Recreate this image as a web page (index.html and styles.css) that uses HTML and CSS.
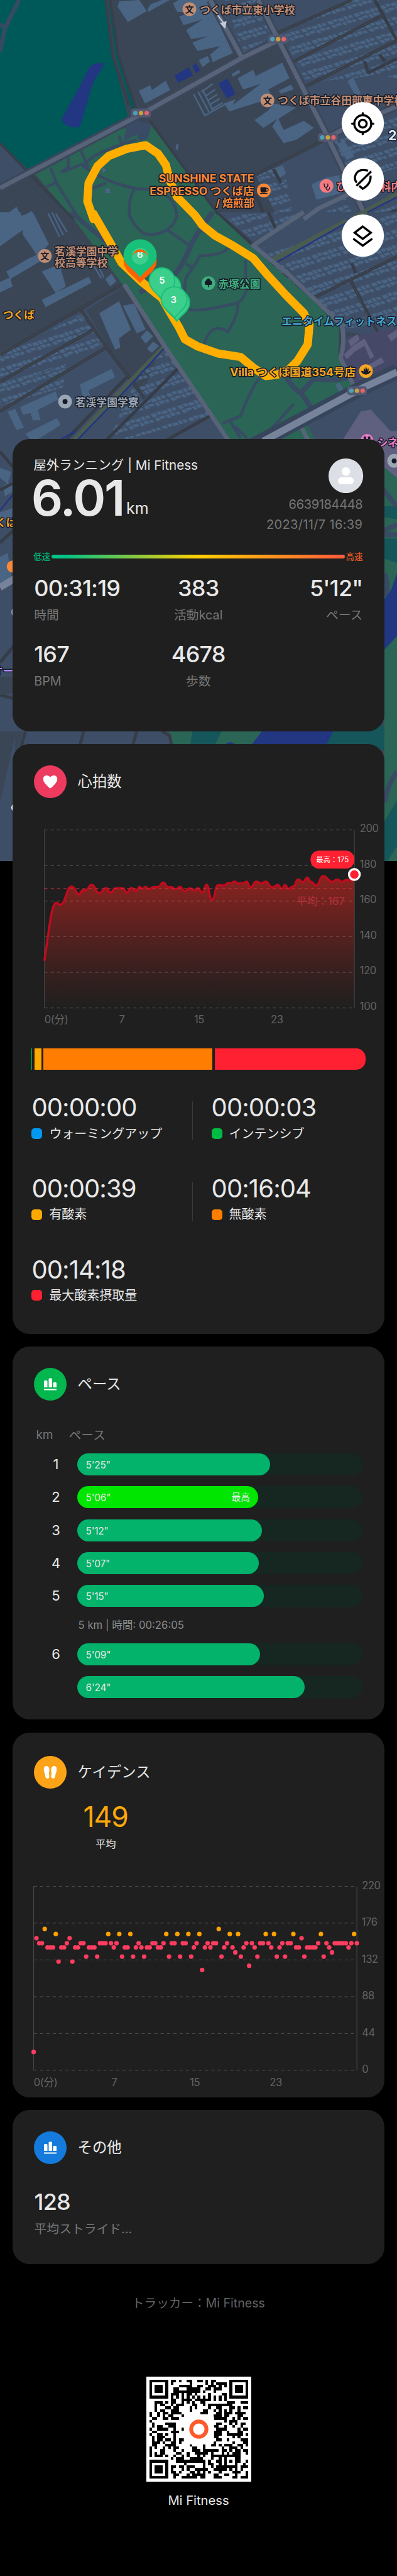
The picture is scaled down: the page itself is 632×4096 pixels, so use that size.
FILE: index.html
```html
<!DOCTYPE html>
<html lang="ja">
<head>
<meta charset="utf-8">
<title>屋外ランニング | Mi Fitness</title>
<link rel="stylesheet" href="styles.css">
</head>
<body>
<svg class="map" viewBox="0 0 1125 2436" preserveAspectRatio="none">
  <defs>
    <pattern id="houses" width="118" height="92" patternUnits="userSpaceOnUse" patternTransform="rotate(-28)">
      <path class="bld" d="M4 8h20v24H4zM29 6h17v20H29zM50 10h22v22H50zM77 6h14v26H77zM96 9h16v20H96zM6 40h16v22H6zM26 38h22v18H26zM54 40h14v24H54zM73 38h20v20H73zM97 42h15v18H97z"/>
    </pattern>
  </defs>
  <rect width="1125" height="2436" fill="#3a4656"/>
  <g transform="scale(.7175 .3954)">
    <path fill="#3d4e66" d="M850 0H1568V1568H1100L1010 1250 1290 1000 1100 300 955 400ZM0 1030L105 1225 0 1320Z"/>
    <path fill="url(#houses)" d="M890 0H1010L1080 250 960 390ZM1110 230L1390 0H1568V560L1500 540 1210 590ZM1320 1020L1568 800V1200L1400 1300ZM1010 1250L1120 1180 1160 1568H1100ZM1130 1568L1360 1400 1400 1568ZM1480 1450H1568V1568H1480Z"/>
    <path fill="#005959" d="M0 0H412L445 400 505 830 110 1210 0 1020ZM428 0H438L470 390 537 770 520 780 455 390Z"/>
    <path class="edge" d="M418 0L445 400 510 760M435 0L467 390 535 770"/>
    <path class="path" d="M75 0L20 200 0 370M0 180L25 190"/>
    <path fill="#223682" d="M350 490Q365 445 408 450Q412 480 380 550Q355 640 352 690L320 880Q315 915 300 914Q245 900 244 850L320 600ZM690 540L745 480 762 540 703 593ZM760 470L775 453 790 505 773 522ZM862 597L898 563 930 670 897 706Z"/>
    <path class="bld" d="M470 10L465 50 505 158 580 80 550 0ZM585 60L595 30 640 0H670L585 85ZM683 25L705 0H825L850 70 880 230 920 380 870 420 840 445 830 390 870 330 780 365 760 305 820 260 755 280 735 215 800 140 725 180 708 118 760 85 700 85ZM548 650L593 610 600 645 655 577 672 645 573 740ZM938 560L1000 500 1010 545 1115 448 1143 560 1060 640 1075 700 905 798 885 740 930 710 920 750 1030 600 960 640ZM1005 860L1060 790 1080 740 1170 770 1100 850 1120 930 1200 865 1240 915 1170 1000 1120 1025 1075 905 1095 850 1040 915ZM1100 650L1150 605 1160 640 1110 670ZM1372 580L1395 553 1425 670 1405 690ZM1230 1320L1290 1270 1340 1255 1350 1380 1250 1430ZM785 430L820 400 830 440 800 480ZM915 530L945 497 948 520 920 550ZM697 1030L706 1034 702 1072 693 1066ZM0 1568L65 1480 90 1568ZM85 1550L125 1510 142 1568ZM1090 1200L1115 1185 1130 1240 1100 1280ZM1330 1030L1360 1010 1400 1120 1370 1145Z"/>
    <path class="bldline" d="M765 675L810 830M782 655L825 800M800 640L840 790M795 660L840 600M810 690L850 640M820 720L858 675M828 750L868 705M838 780L880 735M808 828L890 745"/>
    <path class="street" d="M1090 240L1390 0M1150 450L1510 110M1205 620L1568 290M1480 0L1568 290M1295 990L1010 1250M1440 440L1455 520 1568 420M1080 1210L1110 1310M1010 1390L1050 1568M1480 1568L1568 1500M1500 390L1520 440"/>
    <path class="lane" d="M1090 240L1390 0M1150 450L1510 110M1205 620L1568 290M1295 990L1010 1250"/>
  </g>
  <g transform="translate(0 600) scale(.7175 .4209)">
    <path fill="#3d4e66" d="M860 0H1568V860L1350 800 1240 580 1060 330ZM0 650L490 490 650 900 910 1568H0ZM1210 1400L1568 1090V1568H1210Z"/>
    <path fill="#3a4656" d="M0 600L480 480 330 660 0 940ZM340 660L490 500 640 890 560 1230 500 1110Z"/>
    <path fill="url(#houses)" d="M880 20L1190 0 1010 200ZM1000 260L1568 0V290L1160 520 1070 350ZM1170 440L1568 330V760L1360 780 1240 580ZM0 960L330 680 410 900 0 1200ZM0 1200L260 1020 250 1180 0 1300ZM600 970L660 940 830 1370 420 1568 500 1250Z"/>
    <path class="bld" d="M0 0H80L103 105 0 230ZM85 25L130 0 193 215 150 300 90 150ZM25 400L110 315 190 250 200 290 40 450ZM165 400L235 350 260 500 220 545ZM0 470L40 440 50 500 0 540ZM165 590L350 435 362 475 180 640ZM392 680L470 600 517 790 470 850 475 910 455 925 430 830ZM485 630L530 615 575 790 540 815ZM415 450L440 415 460 465 435 500ZM315 1160L440 1055 455 1110 350 1200 355 1230 330 1260ZM80 1310L220 1205 230 1260 150 1330 160 1400 130 1400 120 1350 90 1365ZM555 840L580 795 605 835 575 885ZM580 920L605 870 628 900 600 945ZM100 1490L225 1385 240 1430 130 1550ZM30 1340L60 1325 95 1450 65 1465Z"/>
    <path class="bldline" d="M190 10L235 165M205 0L250 155M220 10L265 135M370 360L400 445M385 350L410 440"/>
    <path class="street" d="M480 490L0 960M320 660L420 910 0 1340M370 790L0 1140M420 910L570 1250M710 1040L400 1568M500 1110L240 1568M830 1370L620 1568M860 10L1240 580M1240 575L1568 300M1390 345L1405 410M1385 460L1568 1060M1060 0L1090 120"/>
    <path class="lane" d="M480 490L0 960M320 660L420 910 0 1340M370 790L0 1140M1240 575L1568 300M1385 460L1560 1060M420 910L570 1250"/>
    <path class="olive" d="M650 905L480 1200 275 1568M1080 320L1290 130 1370 60"/>
    <path class="stream" d="M652 910L500 1190 285 1568M1085 345L1370 70"/>
    <path fill="#454866" d="M1370 840L1568 780V1040L1400 1150 1345 980Z"/>
    <path fill="#5f5f80" d="M1375 865L1412 820 1420 860 1385 905ZM1358 960L1395 895 1440 850 1478 970 1462 990 1440 900 1400 940 1370 990ZM1445 1040L1505 975 1518 1010 1460 1060ZM1530 830L1568 790V840L1545 870ZM1425 1340L1465 1328 1568 1520V1568H1340Z"/>
  </g>
  <path fill="#2a6555" d="M100 494L345 364 430 356 615 605 760 740 890 853 961 928 958 1012 994 1084 1000 1110 870 1200 900 1260H655L345 802 213 625Z"/>
  <path fill="#3a4b66" d="M360 356L382 340 430 352 418 392 395 400 388 380 350 400Z"/>
  <g transform="scale(.7175 .3954)">
    <path class="park-path" d="M540 1000L480 1030 470 970M490 1030Q360 1100 330 1190Q420 1310 540 1350L620 1360M270 1130V1200L240 1230M320 1080L350 1200M200 1200Q220 1300 230 1330L310 1560M180 1340L230 1300M360 1350L420 1310M530 1355Q500 1450 515 1568M650 1390Q700 1450 698 1568M330 1170L250 1230"/>
    <path class="bld" d="M398 1195L420 1215 408 1240ZM415 1350L432 1345 436 1380 418 1384Z"/>
  </g>
  <g transform="translate(0 600) scale(.7175 .4209)">
    <path class="park-path" d="M510 0Q520 90 570 145Q610 165 660 120Q700 70 698 0M660 120L745 220M735 345L765 385M900 240Q890 285 790 295Q750 410 735 440Q720 560 740 650Q770 680 940 610Q980 560 970 480V320M940 610Q940 700 900 805Q830 730 805 900M1025 1110Q980 1230 950 1370L880 1420M1160 1290L1060 1480M910 1410L950 1520M930 1440L1000 1568"/>
    <path class="park-wide" d="M840 0Q760 180 745 260Q720 360 690 420L550 540M1130 1110Q1160 1190 1190 1220L1240 1340M1190 1210L1240 1120Q1320 1140 1380 1110M280 0L420 200 530 430"/>
    <path fill="#4a6484" d="M1325 1160L1340 1145 1360 1200 1340 1210Z"/>
    <path class="road" d="M490 485L650 900 915 1568M1200 0L1000 225 1140 420 1350 760Q1365 860 1345 980L1400 1180M1180 1410L1215 1530"/>
    <path class="main-casing" d="M1000 1568L1410 1200 1568 1070"/>
    <path class="main" d="M1040 1540L1410 1200 1568 1075"/>
  </g>
  <g transform="scale(.7175 .3954)">
    <path class="edge" d="M590 860L860 1530M0 1025L110 1230 290 1568"/>
    <path class="casing" d="M0 1345L560 815 960 410 1098 290M1020 0L1098 280 1295 983 1450 1568M830 0L955 410M1295 983L1350 930 1568 760"/>
    <path class="road" d="M0 1345L560 815 960 410 1098 290M1020 0L1098 280 1295 983 1450 1568M830 0L955 410M1295 983L1350 930 1568 760M1200 1568L1260 1490 1400 1370"/>
    <path class="olive" d="M1568 1390L1390 1568"/><path class="stream" d="M1568 1410L1450 1520"/>
  </g>
  <g transform="translate(0 1220) scale(.7175 .574)">
    <path fill="#3d4e66" d="M0 0H60V1568H0ZM0 1400H680V1568H0Z"/>
    <path fill="#2a6555" d="M1518 180H1568V1568H1518ZM670 1440H1320V1568H670Z"/>
    <path fill="#5f5f80" d="M1500 0H1568V230Q1530 190 1500 160Z"/>
    <path fill="#15565a" d="M1500 370H1568V435L1500 420ZM1500 530H1568V650L1500 620ZM1280 1440H1510Q1525 1500 1520 1568H1280ZM760 1470H880L840 1568H750Z"/>
    <path fill="#223682" d="M1568 700V1010L1500 1100V860L1545 780ZM1040 1470H1320L1280 1568H980ZM875 1568Q900 1510 935 1550L940 1568Z"/>
    <path class="bld" d="M0 180L45 200 30 260 0 230ZM10 270L48 245V300L20 320ZM0 620L30 600 50 740 0 750ZM0 400L48 380V420L0 440Z"/>
    <path class="street" d="M0 550L60 480M0 290L60 250M0 100L60 190M0 1140L60 1050M0 1300L60 1320M100 1480L80 1568M330 1480L312 1568M540 1480L520 1568M640 1480L670 1500 680 1568"/>
    <path class="stream" d="M0 390L60 300M240 40L300 0"/>
    <path class="main" d="M0 770L60 725"/>
    <path class="park-wide" d="M1500 270L1568 370M1500 510H1568M1518 700Q1540 760 1518 810M1568 460L1500 500"/>
    <path fill="#3a4656" d="M0 1210H50V1290L0 1300ZM0 1480H90L70 1568H0Z"/>
  </g>
  <g transform="translate(0 2080) scale(.7175 .5421)">
    <path fill="#3d4e66" d="M0 0H60V657H0Z"/><path fill="#3a4656" d="M0 0H60L0 350Z"/>
    <path fill="#2a6555" d="M1518 0H1568V657H1518Z"/>
    <path fill="#15565a" d="M1518 450L1568 340V580L1530 657H1518Z"/>
    <path class="park-wide" d="M1568 190Q1530 260 1518 350"/>
  </g>
  <path class="route" d="M262 600L265 620 247.500 569 251 518 276 470.500 308.500 441 359 421 412.600 411 448 435 470 466.600 481 510 502 557.500 552.500 609 574 638 610 667 660 694.700 717.500 730.500 760.600 781 811 835.700 861 886 877 920 872 974.600 843 1021 818 1046 786 1060 753 1064 717.500 1040 682 1010 617 1000 560 980 524 960 506 924 488 894.600 459 844 402 798 344 743 308.500 680 262 600"/>
  <path class="arrow" d="M617 43L632 63M626 66L640 62 637 78Z"/>
  <g id="signals"></g>
  <g class="pins">
    <path fill="#ff5f00" d="M397 801C378 780 350 765 350 738a47 47 0 0 1 94 0C444 765 416 780 397 801Z"/>
    <path fill="#18c07a" d="M397 785C380 760 350 750 350 724a47 47 0 0 1 94 0C444 750 414 760 397 785Z"/>
    <circle cx="397" cy="725" r="23.500" fill="#3ccf8c"/>
    <text x="397" y="730" class="pin-num">6</text>
    <path fill="#ff5f00" d="M374 727a23.500 27 0 0 1 46 0q-4-14-23-14t-23 14Z"/>
    <path class="pin" d="M477 870C466 850 441 838 441 812a35.500 35.500 0 0 1 71 0C512 838 488 850 477 870Z"/>
    <path class="pin" d="M460 848C449 832 423 820 423 794a36 36 0 0 1 72 0C495 820 471 832 460 848Z"/>
    <text x="459" y="802" class="pin-num">5</text>
    <path class="pin" d="M501 909C490 890 465 882 465 856a36 36 0 0 1 72 0C537 882 512 890 501 909Z"/>
    <path class="pin" d="M495 900C484 882 457 872 457 848a36.500 36.500 0 0 1 73 0C530 872 506 882 495 900Z"/>
    <text x="492" y="857" class="pin-num">3</text>
  </g>
  <g class="poi">
    <g class="school">
      <circle cx="536.700" cy="26" r="19.500"/><text class="glyph" x="536.700" y="35">文</text><text x="566" y="39">つくば市立東小学校</text>
      <circle cx="757.700" cy="284" r="19.500"/><text class="glyph" x="757.700" y="293">文</text><text x="787" y="296">つくば市立谷田部東中学校</text>
      <circle cx="127" cy="724" r="19.500"/><text class="glyph" x="127" y="733">文</text><text x="155" y="722">茗溪学園中学</text><text x="155" y="754">校高等学校</text>
    </g>
    <g class="cafe">
      <text x="720" y="516" text-anchor="end" textLength="270" lengthAdjust="spacingAndGlyphs">SUNSHINE STATE</text>
      <text x="720" y="551" text-anchor="end" textLength="296" lengthAdjust="spacingAndGlyphs">ESPRESSO つくば店</text>
      <text x="720" y="586" text-anchor="end">/ 焙煎部</text>
      <circle cx="747.600" cy="538.500" r="19.500"/><path class="ink" d="M738 530h17v8q0 7-5 7h-7q-5 0-5-7Z"/><path class="inkline" d="M755 533q6-1 5 4t-6 4M737 547.500h21"/>
      <circle cx="36" cy="1603" r="17"/>
    </g>
    <g class="clinic"><circle cx="925" cy="526" r="19.500"/><path class="inkline" d="M919 519v6q0 5 5 5t5-5v-6M924 530q0 8 5 8t5-8"/><text x="953" y="539">ひ</text><text x="1078" y="539">科内</text></g>
    <g class="nature"><circle cx="590.500" cy="801" r="19.500"/><path class="ink" d="M589 813v-7q-9 1-9-5t4-7q2-6 6.500-6t6.500 6q4 1 4 7t-9 5v7Z"/><text x="618" y="815">赤塚公園</text></g>
    <g class="gold"><text x="8" y="903">つくば</text><text x="-12" y="1489">くば</text><text x="652" y="1064" textLength="356" lengthAdjust="spacingAndGlyphs">Villa つくば国道354号店</text><circle cx="1036.800" cy="1050" r="19.500"/><path class="ink" d="M1037 1060q-12-1-14-11q7 0 9 4q-3-6-1-11q3 1 4 6q0-7 2-10q3 3 3 10q1-5 4-6q2 5-1 11q2-4 8-4q-2 10-14 11Z"/></g>
    <g class="gym"><text x="798" y="920">エニタイムフィットネス</text></g>
    <g class="plain"><text x="213" y="1149">茗渓学園学寮</text><circle cx="184.400" cy="1136" r="19.500"/><circle class="ink" cx="184.400" cy="1136" r="7"/><circle cx="1117" cy="1304" r="19.500"/><circle class="ink" cx="1117" cy="1304" r="7"/><circle cx="48" cy="1732" r="16"/></g>
    <g class="cinema"><circle cx="1040" cy="1246" r="18"/><circle class="ink" cx="1034" cy="1239" r="4"/><circle class="ink" cx="1046" cy="1239" r="4"/><text x="1069" y="1263">シネ</text></g>
    <g class="shop"><text x="-22" y="1910">オー</text></g>
    <text x="1100" y="396" class="route-no">2</text>
    <circle cx="44" cy="2285" r="12" fill="#fff"/>
  </g>
  <g fill="#fff"><circle cx="1028" cy="348.700" r="60"/><circle cx="1028" cy="507.700" r="60"/><circle cx="1028" cy="666.700" r="60"/></g>
  <g class="tool">
    <circle cx="1028" cy="350" r="24"/><circle cx="1028" cy="350" r="11"/><path d="M1028 320v6M1028 374v6M998 350h6M1052 350h6"/>
    <path stroke-linecap="butt" d="M1043 483Q1036 481 1028 481A22 22 0 0 0 1011 517M1050 497Q1052 520 1028 534L1018 526M1010 526L1052 485"/>
    <path d="M1028 641L1051 658.500 1028 676 1005 658.500ZM1003 677L1028 695 1053 677"/>
  </g>
</svg>

<main class="page">
  <section class="card summary">
    <div class="head">
      <div class="head-left">
        <div class="sport">屋外ランニング | Mi Fitness</div>
        <div class="distance"><b>6.01</b><span>km</span></div>
      </div>
      <div class="head-right">
        <svg class="avatar" viewBox="0 0 55 55"><circle cx="27.500" cy="27.500" r="27.500" fill="#dcdfe5"/><circle cx="27.500" cy="20.700" r="6.800" fill="#fff"/><rect x="15" y="30" width="25" height="10.700" rx="5.300" fill="#fff"/></svg>
        <div>6639184448</div><div class="date">2023/11/7 16:39</div>
      </div>
    </div>
    <div class="speed"><span class="slow">低速</span><i></i><span class="fast">高速</span></div>
    <div class="stats">
      <div><b>00:31:19</b><span>時間</span></div>
      <div class="mid"><b>383</b><span>活動kcal</span></div>
      <div class="end"><b>5'12"</b><span>ペース</span></div>
      <div><b>167</b><span>BPM</span></div>
      <div class="mid"><b>4678</b><span>歩数</span></div>
    </div>
  </section>

  <section class="card heart">
    <header><span class="icon red"><svg viewBox="0 0 52 52"><path fill="#fff" d="M26 36.500Q24.500 36.500 17.500 28.500Q14.500 25 14.700 21.500Q15.200 16 20.500 16Q24 16 26 18.500Q28 16 31.500 16Q36.800 16 37.300 21.500Q37.500 25 34.500 28.500Q27.500 36.500 26 36.500Z"/></svg></span><h2>心拍数</h2></header>
    <svg class="chart-hr" viewBox="20.200 1269.500 591.600 370">
      <defs><linearGradient id="hr" x1="0" y1="0" x2="0" y2="1"><stop offset="0" stop-color="#8a2420"/><stop offset=".35" stop-color="#60211f"/><stop offset=".7" stop-color="#3a201f"/><stop offset="1" stop-color="#1f1f1f"/></linearGradient></defs>
      <g transform="translate(0 1168.800) scale(.40306 .30463)"><path id="hr-area" fill="url(#hr)"/></g>
      <path class="grid" d="M70.900 1320.200H564.300M70.900 1376.800H564.300M70.900 1433.400H564.300M70.900 1490H564.300M70.900 1546.600H564.300M70.900 1603.200H564.300"/>
      <path class="axis" d="M70.900 1320V1603M564.300 1320V1603"/>
      <g transform="translate(0 1168.800) scale(.40306 .30463)"><path id="hr-line"/></g>
      <path class="avg" d="M70.900 1413.400H564.300"/>
      <text class="avg-text" x="549" y="1440" text-anchor="end">平均：167</text>
      <g class="tick"><text x="573" y="1324">200</text><text x="573" y="1380.500">180</text><text x="573" y="1437">160</text><text x="573" y="1493.500">140</text><text x="573" y="1550">120</text><text x="573" y="1606.500">100</text>
      <text x="71" y="1628">0(分)</text><text x="194.300" y="1628" text-anchor="middle">7</text><text x="317.200" y="1628" text-anchor="middle">15</text><text x="441" y="1628" text-anchor="middle">23</text></g>
      <rect x="494.600" y="1353" width="69.700" height="28.600" rx="13.500" fill="#ff2032"/><text class="max" x="529.400" y="1372" text-anchor="middle">最高：175</text>
      <circle cx="564.300" cy="1391" r="8.500" fill="#ff2032" stroke="#fff" stroke-width="3.400"/>
    </svg>
    <div class="zonebar"><i class="z2"></i><i class="z3"></i><i class="z4"></i><i class="z5"></i></div>
    <div class="zones">
      <div class="ruled"><b>00:00:00</b><span><i class="blue"></i>ウォーミングアップ</span></div>
      <div><b>00:00:03</b><span><i class="z2"></i>インテンシブ</span></div>
      <div class="ruled"><b>00:00:39</b><span><i class="z3"></i>有酸素</span></div>
      <div><b>00:16:04</b><span><i class="z4"></i>無酸素</span></div>
      <div><b>00:14:18</b><span><i class="z5"></i>最大酸素摂取量</span></div>
    </div>
  </section>

  <section class="card pace">
    <header><span class="icon green"><svg viewBox="0 0 52 52"><path fill="#fff" d="M16 21.500q0-1.500 1.500-1.500h2.500q1.500 0 1.500 1.500v9.500h-5.500ZM23.500 18q0-1.500 1.500-1.500h2.500q1.500 0 1.500 1.500v13h-5.500ZM30.500 24.500q0-1.500 1.500-1.500h2.500q1.500 0 1.500 1.500v6.500h-5.500ZM16 33.500h20v2H16Z"/></svg></span><h2>ペース</h2></header>
    <div class="cols"><span>km</span><span>ペース</span></div>
    <div class="lap"><b>1</b><div class="track"><div class="fill" style="width:306.700px"><span>5'25"</span></div></div></div>
    <div class="lap"><b>2</b><div class="track"><div class="fill best" style="width:288.600px"><span>5'06"</span><span>最高</span></div></div></div>
    <div class="lap"><b>3</b><div class="track"><div class="fill" style="width:294.200px"><span>5'12"</span></div></div></div>
    <div class="lap"><b>4</b><div class="track"><div class="fill" style="width:289.400px"><span>5'07"</span></div></div></div>
    <div class="lap"><b>5</b><div class="track"><div class="fill" style="width:297px"><span>5'15"</span></div></div></div>
    <div class="split">5 km | 時間: 00:26:05</div>
    <div class="lap"><b>6</b><div class="track"><div class="fill" style="width:291.400px"><span>5'09"</span></div></div></div>
    <div class="lap"><b></b><div class="track"><div class="fill" style="width:362.400px"><span>6'24"</span></div></div></div>
  </section>

  <section class="card cadence">
    <header><span class="icon amber"><svg viewBox="0 0 52 52"><path fill="#fff" d="M20 16Q24.500 16.500 24.500 22Q24.500 25 23.800 27.500Q24.500 31 24.500 33Q24.300 36 21.500 36Q18.800 36 18.300 33Q17.800 29 16.500 26Q15.500 23 15.700 20.500Q16.300 16 20 16ZM32 16Q27.500 16.500 27.500 22Q27.500 25 28.200 27.500Q27.500 31 27.500 33Q27.700 36 30.500 36Q33.200 36 33.700 33Q34.200 29 35.500 26Q36.500 23 36.300 20.500Q35.700 16 32 16Z"/></svg></span><h2>ケイデンス</h2></header>
    <div class="average"><b>149</b><span>平均</span></div>
    <svg class="chart-cad" viewBox="20.200 2944.400 591.600 390">
      <path class="grid" d="M53.800 2999.800H568.300M53.800 3058.300H568.300M53.800 3116.800H568.300M53.800 3175.300H568.300M53.800 3233.800H568.300M53.800 3292.300H568.300"/>
      <path class="axis" d="M53.800 2999.500V3292.500M568.300 2999.500V3292.500"/>
      <g id="dots"></g>
      <g class="tick"><text x="576.400" y="3004">220</text><text x="576" y="3062.500">176</text><text x="576" y="3121">132</text><text x="576.400" y="3179.500">88</text><text x="576.400" y="3238">44</text><text x="576.400" y="3296.500">0</text>
      <text x="54" y="3317">0(分)</text><text x="182.200" y="3317" text-anchor="middle">7</text><text x="310.400" y="3317" text-anchor="middle">15</text><text x="439.300" y="3317" text-anchor="middle">23</text></g>
    </svg>
  </section>

  <section class="card other">
    <header><span class="icon azure"><svg viewBox="0 0 52 52"><path fill="#fff" d="M16 21.500q0-1.500 1.500-1.500h2.500q1.500 0 1.500 1.500v9.500h-5.500ZM23.500 18q0-1.500 1.500-1.500h2.500q1.500 0 1.500 1.500v13h-5.500ZM30.500 24.500q0-1.500 1.500-1.500h2.500q1.500 0 1.500 1.500v6.500h-5.500ZM16 33.500h20v2H16Z"/></svg></span><h2>その他</h2></header>
    <div class="stride"><b>128</b><span>平均ストライド...</span></div>
  </section>

  <footer>
    <div class="tracker">トラッカー：Mi Fitness</div>
    <svg class="qr" viewBox="-1.100 -1.100 39.200 39.200"><rect x="-1.100" y="-1.100" width="39.200" height="39.200" fill="#fff"/><path id="qr-modules" shape-rendering="crispEdges"/><rect x="12.900" y="12.900" width="11.300" height="11.300" rx="1.500" fill="#fff"/><circle cx="18.500" cy="18.500" r="2.850" fill="none" stroke="#ff5a2c" stroke-width="1.450"/></svg>
    <div class="brand">Mi Fitness</div>
  </footer>
</main>
<script src="app.js"></script>
</body>
</html>
```
FILE: styles.css
```css
* { box-sizing: border-box; }
html, body { margin: 0; background: #000; }
body {
  position: relative;
  width: 632px;
  height: 4096px;
  overflow: hidden;
  color: #e8e8e8;
  font-family: Inter, "Noto Sans CJK JP", sans-serif;
}
b { font-weight: 400; }
i { display: block; }
h2 { margin: 0; font-size: 23.4px; font-weight: 400; line-height: 52px; }

/* map backdrop */
.map { position: absolute; left: 0; top: 0; width: 632px; height: 1369px; display: block; }
.map path { vector-effect: non-scaling-stroke; }
.bld { fill: #4a6484; }
.bldline { fill: none; stroke: #4a6484; stroke-width: 2.5; }
.lane { fill: none; stroke: #4d4f57; stroke-width: .8; }
.street { fill: none; stroke: #363d48; stroke-width: 5; stroke-linejoin: round; }
.edge { fill: none; stroke: #373f4b; stroke-width: 4; }
.path { fill: none; stroke: #354a63; stroke-width: 7; }
.park-path { fill: none; stroke: #384b63; stroke-width: 4.5; }
.park-wide { fill: none; stroke: #384b63; stroke-width: 8; }
.casing { fill: none; stroke: #3d475b; stroke-width: 13; }
.road { fill: none; stroke: #576378; stroke-width: 7; stroke-linejoin: round; }
.main-casing { fill: none; stroke: #37455c; stroke-width: 24; }
.main { fill: none; stroke: #76839b; stroke-width: 11; }
.olive { fill: none; stroke: #4a5c50; stroke-width: 8; }
.stream { fill: none; stroke: #223682; stroke-width: 2.5; }
.route { fill: none; stroke: #ffae00; stroke-width: 13; stroke-linejoin: round; }
.arrow { fill: #c3cad8; stroke: #c3cad8; stroke-width: 2; }
.pin { fill: #3ccf8c; stroke: #18c07a; stroke-width: 2; }
.pin-num { fill: #fff; font-size: 26px; font-weight: 600; text-anchor: middle; }
.poi text { font-size: 30px; font-weight: 700; paint-order: stroke; stroke: #161a26; stroke-width: 5px; stroke-linejoin: round; }
.poi .glyph { fill: #1b1d2a; stroke: none; font-size: 25px; text-anchor: middle; }
.poi .ink { fill: #161a26; }
.poi .inkline { fill: none; stroke: #161a26; stroke-width: 1.3; }
.school { fill: #c08e74; }
.cafe { fill: #f98838; }
.clinic { fill: #f47a80; }
.nature { fill: #3fae80; }
.gold { fill: #f5a623; }
.gym { fill: #45a4d2; }
.plain { fill: #9ba6b4; }
.cinema { fill: #e57cc8; }
.shop { fill: #a98bf0; }
.poi .route-no { fill: #dce8fa; font-size: 38px; }
.tool { fill: none; stroke: #000; stroke-width: 6; stroke-linecap: round; stroke-linejoin: miter; }
.map .tool path { vector-effect: none; }

/* cards */
.page { position: relative; padding: 698.1px 20.2px 0; }
.card { background: #1f1f1f; border-radius: 27px; overflow: hidden; margin-bottom: 20.3px; }
.card header { display: flex; gap: 17.6px; margin-left: 33.8px; }
.icon { width: 52px; height: 52px; border-radius: 50%; }
.icon svg { display: block; width: 52px; height: 52px; }
.red { background: #ec3b5f; }
.green { background: #03b64d; }
.amber { background: #fca318; }
.azure { background: #147bdc; }

.summary { height: 465.1px; padding: 28.3px 34.5px 0 33px; }
.head { display: flex; justify-content: space-between; height: 123.5px; }
.sport { font-size: 20.6px; line-height: 28px; white-space: nowrap; }
.distance { display: flex; margin-top: 6.8px; height: 60px; margin-left: -3.5px; }
.distance b { font-size: 79px; line-height: 60px; font-weight: 560; letter-spacing: -2.3px; }
.distance span { font-size: 25px; line-height: 60px; padding-top: 16.5px; margin-left: 4px; }
.head-right { color: #767676; font-size: 20px; line-height: 32px; text-align: right; letter-spacing: -.35px; padding-top: 2.2px; }
.date { letter-spacing: .35px; }
.avatar { display: block; width: 55.2px; height: 55.2px; margin: 0 -1.2px 2.1px auto; }
.speed { display: flex; align-items: center; justify-content: space-between; margin-top: 25px; height: 20px; font-size: 13.4px; line-height: 20px; }
.speed i { width: 466.8px; height: 5.5px; border-radius: 3px; background: linear-gradient(90deg, #00c389, #00c389 4%, #ffd000 50%, #ff5a3c); }
.slow { color: #00c389; }
.fast { color: #ff5f28; }
.stats { display: grid; grid-template-columns: 1fr 1fr 1fr; row-gap: 24.2px; margin: 18.6px 0 0 1px; }
.stats b, .zones b, .stride b { display: block; font-size: 36px; line-height: 44px; letter-spacing: -.8px; font-weight: 450; }
.stats span, .stride span { display: block; margin-top: 6px; color: #767676; font-size: 19.8px; line-height: 30px; }
.stats .mid { text-align: center; }
.stats .end { text-align: right; }

.heart { height: 937.3px; padding-top: 34px; }
.chart-hr { display: block; width: 591.6px; height: 370px; }
.grid { fill: none; stroke: #fff; stroke-opacity: .22; stroke-width: 1; stroke-dasharray: 5 5.1; }
.axis { fill: none; stroke: #4c4c4c; stroke-width: 1; }
.tick { fill: #636363; font-size: 16.6px; letter-spacing: -.4px; }
#hr-line { fill: none; stroke: #c00b1e; stroke-width: 3.5; stroke-linejoin: round; vector-effect: non-scaling-stroke; }
.avg { fill: none; stroke: #d63347; stroke-opacity: .75; stroke-width: 1.2; stroke-dasharray: 5 5.1; }
.avg-text { fill: #b5303a; font-size: 16.8px; }
.max { fill: #fff; font-size: 11.4px; }
.zonebar { display: flex; height: 33.5px; margin: 28px 30.2px 0; }
.zonebar .z2 { width: 1px; margin-right: 3.4px; }
.zonebar .z3 { width: 10.9px; margin-right: 3.2px; }
.zonebar .z4 { width: 269.3px; margin-right: 3.6px; }
.zonebar .z5 { flex: 1; border-radius: 0 15px 15px 0; }
.blue { background: #0099f0; }
.z2 { background: #00bb44; }
.z3 { background: #fda900; }
.z4 { background: #ff7d00; }
.z5 { background: #ff2032; }
.zones { display: grid; grid-template-columns: 286.2px 1fr; grid-auto-rows: 128.7px; margin: 36.3px 0 0 30.2px; }
.zones b { font-size: 40px; line-height: 48px; letter-spacing: -.9px; font-weight: 400; }
.zones span { display: flex; align-items: center; gap: 11px; margin-top: 3.3px; font-size: 20px; line-height: 28px; }
.zones span i { width: 17px; height: 17px; border-radius: 5px; }
.ruled { background: linear-gradient(#3a3a3a, #3a3a3a) 256px 14px / 1px 61px no-repeat; }

.pace { height: 593.3px; padding-top: 33.7px; }
.cols { display: flex; margin: 43px 0 0 37.2px; color: #767676; font-size: 19.8px; line-height: 24px; }
.cols span:first-child { width: 52.2px; font-size: 19px; }
.lap { display: flex; height: 35px; margin-top: 17.23px; }
.cols + .lap { margin-top: 17.5px; }
.split + .lap { margin-top: 0; }
.lap b { width: 102.7px; padding-left: 35px; text-align: center; font-size: 22px; line-height: 35px; }
.track { width: 453.9px; border-radius: 17.5px; background: #162620; }
.fill { display: flex; justify-content: space-between; height: 35px; padding: 0 13.7px; border-radius: 17.5px; background: #03b26b; font-size: 15.5px; line-height: 37px; letter-spacing: -.2px; }
.best { background: #00e600; }
.fill span + span { font-size: 14.8px; }
.split { height: 58px; margin-left: 104.4px; color: #8b8b8b; font-size: 16.7px; line-height: 58px; }

.cadence { height: 580px; padding-top: 37.4px; }
.average { width: 120px; margin: 20.1px 0 0 88px; text-align: center; }
.average b { display: block; color: #fca80a; font-size: 44.5px; line-height: 50px; letter-spacing: -1px; }
.average span { display: block; margin-top: 6.2px; font-size: 16.3px; line-height: 24px; }
.chart-cad { display: block; width: 591.6px; height: 390px; }

.other { height: 244.6px; padding-top: 34px; margin-bottom: 0; }
.stride { margin: 38.3px 0 0 34.4px; }
footer { text-align: center; }
.tracker { margin-top: 47.7px; color: #636363; font-size: 19.6px; line-height: 30px; }
.qr { display: block; width: 167px; height: 167px; margin: 101.5px auto 15.6px; }
.brand { font-size: 20.2px; line-height: 30px; }
```
FILE: app.js
```js
const $ = (id) => document.getElementById(id);

// Traffic signals on the map
$('signals').innerHTML = [[788, 110.7], [399.6, 320], [929, 388.7], [1011.7, 1105.5]].map(([x, y]) =>
  `<rect x="${x - 28}" y="${y - 12.5}" width="56" height="25" rx="8" fill="#535871"/>` +
  ['#4f9fb8', '#c9a23c', '#e66468'].map((c, i) => `<circle cx="${x - 16 + i * 16}" cy="${y}" r="6.3" fill="${c}"/>`).join('')
).join('');

// Heart rate: successive peaks and dips
const hr = [[222,876],[238,888],[284,793],[313,833],[327,812],[338,812],[363,783],[392,827],[419,801],[438,824],[456,802],[486,802],[501,824],[520,800],[538,815],[552,794],[563,805],[575,794],[590,806],[605,796],[626,794],[645,771],[665,797],[675,795],[695,806],[712,794],[730,816],[751,802],[765,813],[782,802],[800,824],[816,783],[838,862],[862,785],[885,787],[903,773],[912,775],[926,766],[942,776],[962,774],[974,766],[990,796],[1013,766],[1033,776],[1050,766],[1075,797],[1098,784],[1114,805],[1126,784],[1140,805],[1160,790],[1178,755],[1197,770],[1214,747],[1229,768],[1249,787],[1277,738],[1313,768],[1332,755],[1351,768],[1370,757],[1388,760],[1400,748]];
let d = 'M176 1180L200 960C208 900 214 880 222 876';
for (let i = 1; i < hr.length; i++) {
  const [x0, y0] = hr[i - 1], [x1, y1] = hr[i], m = (x0 + x1) / 2;
  d += `C${m} ${y0} ${m} ${y1} ${x1} ${y1}`;
}
$('hr-line').setAttribute('d', d);
$('hr-area').setAttribute('d', d + 'V1426H176Z');

// Cadence samples, one letter per reading
const level = { Z: 22, h: 158, m: 152, O: 169, l: 147, o: 163, d: 130, p: 136, z: 120, k: 141, y: 125 };
const beats = 'ZhmmOlllodllmhdllmmplllpmmmomlmopllopmlplllmmllmopmmopmmoplmozlmlmmO'
  .replace('lopmlplllmm', 'loplmlpllmm') + 'plmolkoplmymlpmmomloplmpmmollhpllllmopmlkmmmmmlmom';
$('dots').innerHTML = [...beats].map((c, i) =>
  `<circle cx="${(53.8 + i * 4.3974).toFixed(1)}" cy="${(3292.3 - level[c] * 1.3295).toFixed(1)}" r="3.6" fill="${c === 'o' || c === 'O' ? '#ffa200' : '#ff3d60'}"/>`).join('');

// QR modules as [first, last] column runs per row
const F = '0-6', E = '0 6', C = '0 2-4 6';
const F2 = ' 30-36', E2 = ' 30 36', C2 = ' 30 32-34 36';
const rows = [
  F + ' 8-9 11 14-15 18-19 21 23-24' + F2,
  E + ' 8 15 21 23 25-28' + E2,
  C + ' 11-15 18-19 22-24 26 28' + C2,
  C + ' 9-10 14-18 21-22 24-26' + C2,
  C + ' 9-18 20 24' + C2,
  E + ' 8-10 12 14-15 17 22 27-28' + E2,
  F + ' 8 10 12 14 16 18 20 22 24 26 28' + F2,
  '8-9 12-15 17-22 24 26 28',
  '2-4 6 8-9 12 14 16 19-20 29-31 34-36',
  '2 4-5 8 10-12 16-17 20 22-30',
  '2 6-7 9-10 15 17 22 25-26 30-31 33 35-36',
  '2 4-5 8-10 15 20-21 24 26 28 30 33',
  '0 3 5-6 8-11 19-21 25-26 28-30 32-35',
  '0 3 5 7-8 12 24-26 28-29 33-34',
  '1-2 5-6 8-10 24-28 31 33 35-36',
  '0 28 30-32',
  '1 6-9 25-26 30 32 34-35',
  '1 3-4 7-9 24-25 28 31 34',
  '0 3-6 9 12 25-28 33 35-36',
  '1-2 8-10 24-26 29 33-34',
  '0 3-4 6 9 24-26 29-34 36',
  '1 3-5 9 24-25 31 33',
  '1 3-4 6-7 9 11-12 25-26 29 34-36',
  '1-3 5 8-9 11 24 31 35-36',
  '1-2 6-9 15 20 23-24 26 28-30 33-34 36',
  '0 2 5 7 9-10 16-17 20 27 30-32 34',
  '0 4-5 9 12 16-18 20-25 27-28 30 32-33 35-36',
  '0 2 4-5 10-11 14 17-21 23 27 29 31-33 36',
  '0 2-4 6 9 12 14 18 20 23-33',
  '8 10-12 15-19 23 26 28 32-33',
  F + ' 10-20 22 25-26 28 30 32-33 36',
  E + ' 13 20 22-23 26 28 32 35',
  C + ' 8-9 11-12 14-16 20 23 25-32 34-36',
  C + ' 8 12 14 17-21 24-28 30 32 34',
  C + ' 8-9 11 15-16 18 20 22 26 31-33 36',
  E + ' 9-10 14 16-20 24-25 28-29 32 36',
  F + ' 9 12-17 19-20 24-26 31-32 34-36',
];
$('qr-modules').setAttribute('d', rows.map((row, y) => row.split(' ').map((run) => {
  const [a, b = a] = run.split('-').map(Number);
  return `M${a} ${y}h${b - a + 1}v1h-${b - a + 1}z`;
}).join('')).join(''));
```
